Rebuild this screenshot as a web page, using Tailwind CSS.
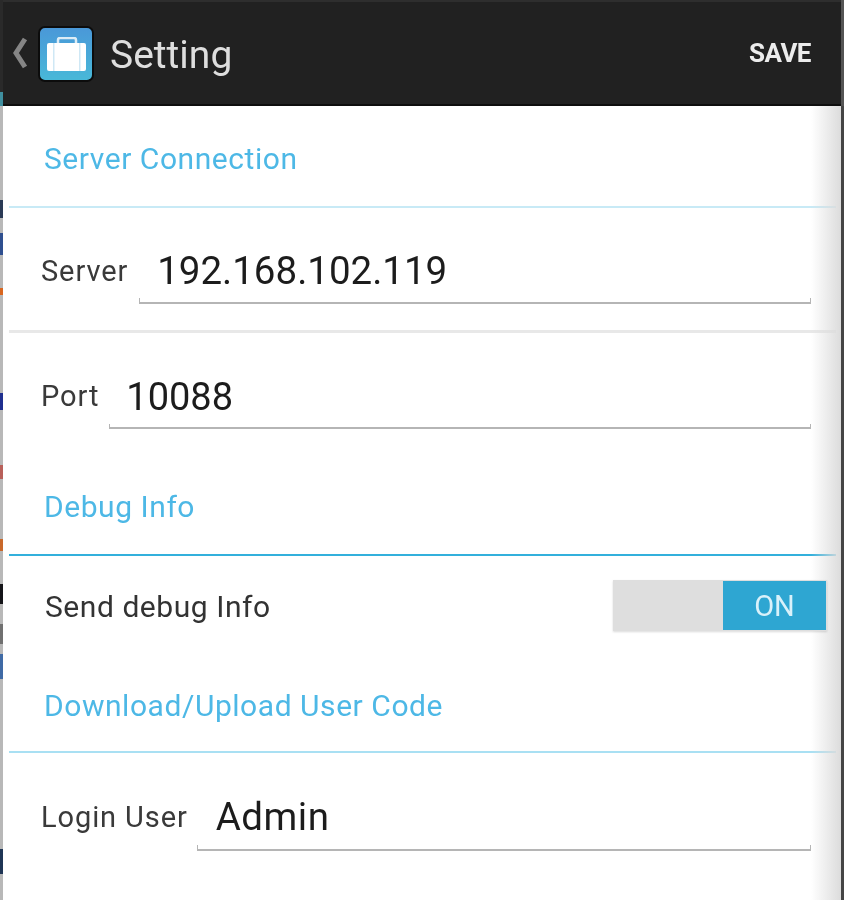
<!DOCTYPE html>
<html lang="en">
<head>
    <meta charset="UTF-8">
    <meta name="viewport" content="width=device-width, initial-scale=1.0">
    <title>Setting</title>
    <script src="https://cdn.jsdelivr.net/npm/@tailwindcss/browser@4"></script>
</head>
<body class="bg-white font-['Roboto',sans-serif]">
    <!-- the reference is an upscaled capture, so everything is slightly soft -->
    <div class="relative flex h-[900px] w-[844px] overflow-hidden blur-[0.6px]">
        <!-- edge of the page behind the screen -->
        <div class="flex w-[3px] shrink-0 flex-col bg-[#b8b8b8]">
            <div class="h-[92px] bg-[#2a2a2a]"></div>
            <div class="h-[14px] bg-[#3f8f9f]"></div>
            <div class="mt-[94px] h-[18px] bg-[#2a3a55]"></div>
            <div class="mt-[15px] h-[22px] bg-[#2f4f8f]"></div>
            <div class="mt-[33px] h-[7px] bg-[#d8661f]"></div>
            <div class="mt-[98px] h-[17px] bg-[#1f2f8f]"></div>
            <div class="mt-[55px] h-[14px] bg-[#b8605a]"></div>
            <div class="mt-[60px] h-[12px] bg-[#c9682a]"></div>
            <div class="mt-[33px] h-[20px] bg-[#141418]"></div>
            <div class="mt-[20px] h-[20px] bg-[#707070]"></div>
            <div class="mt-[10px] h-[25px] bg-[#3f6aa5]"></div>
            <div class="mt-[170px] h-[25px] bg-[#1f3555]"></div>
        </div>

        <div class="relative flex min-w-0 flex-1 flex-col bg-white">
            <header class="flex h-[106px] shrink-0 items-center border-t-2 border-b-2 border-t-[#2e2e2e] border-b-[#0e0e0e] bg-[#212121]">
                <svg class="ml-[7px] h-[34px] w-[18px]" viewBox="0 0 18 34">
                    <path d="M15 3 L6 17 L15 31" fill="none" stroke="#858585" stroke-width="5"/>
                </svg>
                <div class="ml-[10px] mt-[2px] flex h-[56px] w-[56px] items-center justify-center rounded-[7px] border-2 border-[#0c0c0c] bg-gradient-to-b from-[#4a98d8] to-[#48b8d8]">
                    <svg class="h-[34px] w-[39px]" viewBox="0 0 39 34">
                        <path d="M11 7 V3 Q11 1 13 1 H27 Q29 1 29 3 V7" fill="none" stroke="#dcecf6" stroke-width="2.5"/>
                        <rect x="0" y="6" width="39" height="28" rx="2" fill="#ffffff"/>
                        <rect x="6" y="6" width="1.5" height="28" fill="#cfe8f5"/>
                        <rect x="32" y="6" width="1.5" height="28" fill="#cfe8f5"/>
                    </svg>
                </div>
                <h1 class="ml-[16px] mt-[5px] text-[39px] leading-none text-[#dedede]">Setting</h1>
                <button class="mr-[30px] ml-auto text-[26px] font-bold leading-none tracking-[-0.5px] text-[#ececec]">SAVE</button>
            </header>

            <main class="relative flex flex-1 flex-col pl-[6px] pr-[5px]">
                <div class="flex h-[102px] items-center border-b-2 border-[#c8eaf6] pl-[35px] pt-[6px]">
                    <h2 class="text-[30px] leading-none tracking-[0.55px] text-[#4db8e6]">Server Connection</h2>
                </div>

                <div class="flex h-[125px] border-b-[3px] border-[#e8e8e8] pl-[32px] pr-[25px]">
                    <label class="mt-[49px] text-[29px] leading-none tracking-[0.9px] text-[#3a3a3a]">Server</label>
                    <div class="ml-[11px] flex flex-1 flex-col pt-[44px]">
                        <div class="pl-[18px] text-[38.5px] leading-none text-[#1c1c1c]">192.168.102.119</div>
                        <div class="mt-[7px] h-[6px] border-x border-b-2 border-[#b5b5b5]"></div>
                    </div>
                </div>

                <div class="flex h-[96px] pl-[32px] pr-[25px]">
                    <label class="mt-[49px] text-[29px] leading-none tracking-[0.9px] text-[#3a3a3a]">Port</label>
                    <div class="ml-[10px] flex flex-1 flex-col pt-[45px]">
                        <div class="pl-[17px] text-[38px] leading-none text-[#1c1c1c]">10088</div>
                        <div class="mt-[8px] h-[6px] border-x border-b-2 border-[#b5b5b5]"></div>
                    </div>
                </div>

                <div class="flex h-[127px] items-end border-b-2 border-[#33b0dc] pl-[35px] pb-[32px]">
                    <h2 class="text-[30px] leading-none tracking-[0.55px] text-[#4db8e6]">Debug Info</h2>
                </div>

                <div class="flex h-[76px] items-center justify-between pl-[36px] pt-[23px] pb-[1px]">
                    <span class="mt-[3px] text-[30px] leading-none tracking-[0.55px] text-[#333333]">Send debug Info</span>
                    <div class="relative z-10 mr-[9px] flex h-[51px] w-[214px] justify-end bg-[#dedede] shadow-[0_1px_2px_rgba(0,0,0,0.15)]">
                        <div class="my-[1px] mr-[1px] flex w-[103px] items-center justify-center bg-[#2ea6d2] pt-[3px] text-[29px] text-[#d9f1fa]">ON</div>
                    </div>
                </div>

                <div class="flex h-[121px] items-end border-b-2 border-[#a9e0f3] pl-[35px] pb-[30px]">
                    <h2 class="text-[30px] leading-none tracking-[0.55px] text-[#4db8e6]">Download/Upload User Code</h2>
                </div>

                <div class="flex pl-[32px] pr-[25px]">
                    <label class="mt-[50px] text-[29px] leading-none tracking-[0.9px] text-[#3a3a3a]">Login User</label>
                    <div class="ml-[9px] flex flex-1 flex-col pt-[45px]">
                        <div class="pl-[19px] text-[38.5px] leading-none tracking-[0.5px] text-[#1c1c1c]">Admin</div>
                        <div class="mt-[8px] h-[6px] border-x border-b-2 border-[#b5b5b5]"></div>
                    </div>
                </div>

                <!-- shadow along the right edge -->
                <div class="pointer-events-none absolute inset-y-0 right-0 w-[30px] bg-gradient-to-r from-white/0 to-[#dcdcdc]"></div>
            </main>
        </div>

        <div class="flex w-[3px] shrink-0 flex-col bg-[#454545]">
            <div class="h-[106px] bg-[#555555]"></div>
        </div>
    </div>
</body>
</html>
